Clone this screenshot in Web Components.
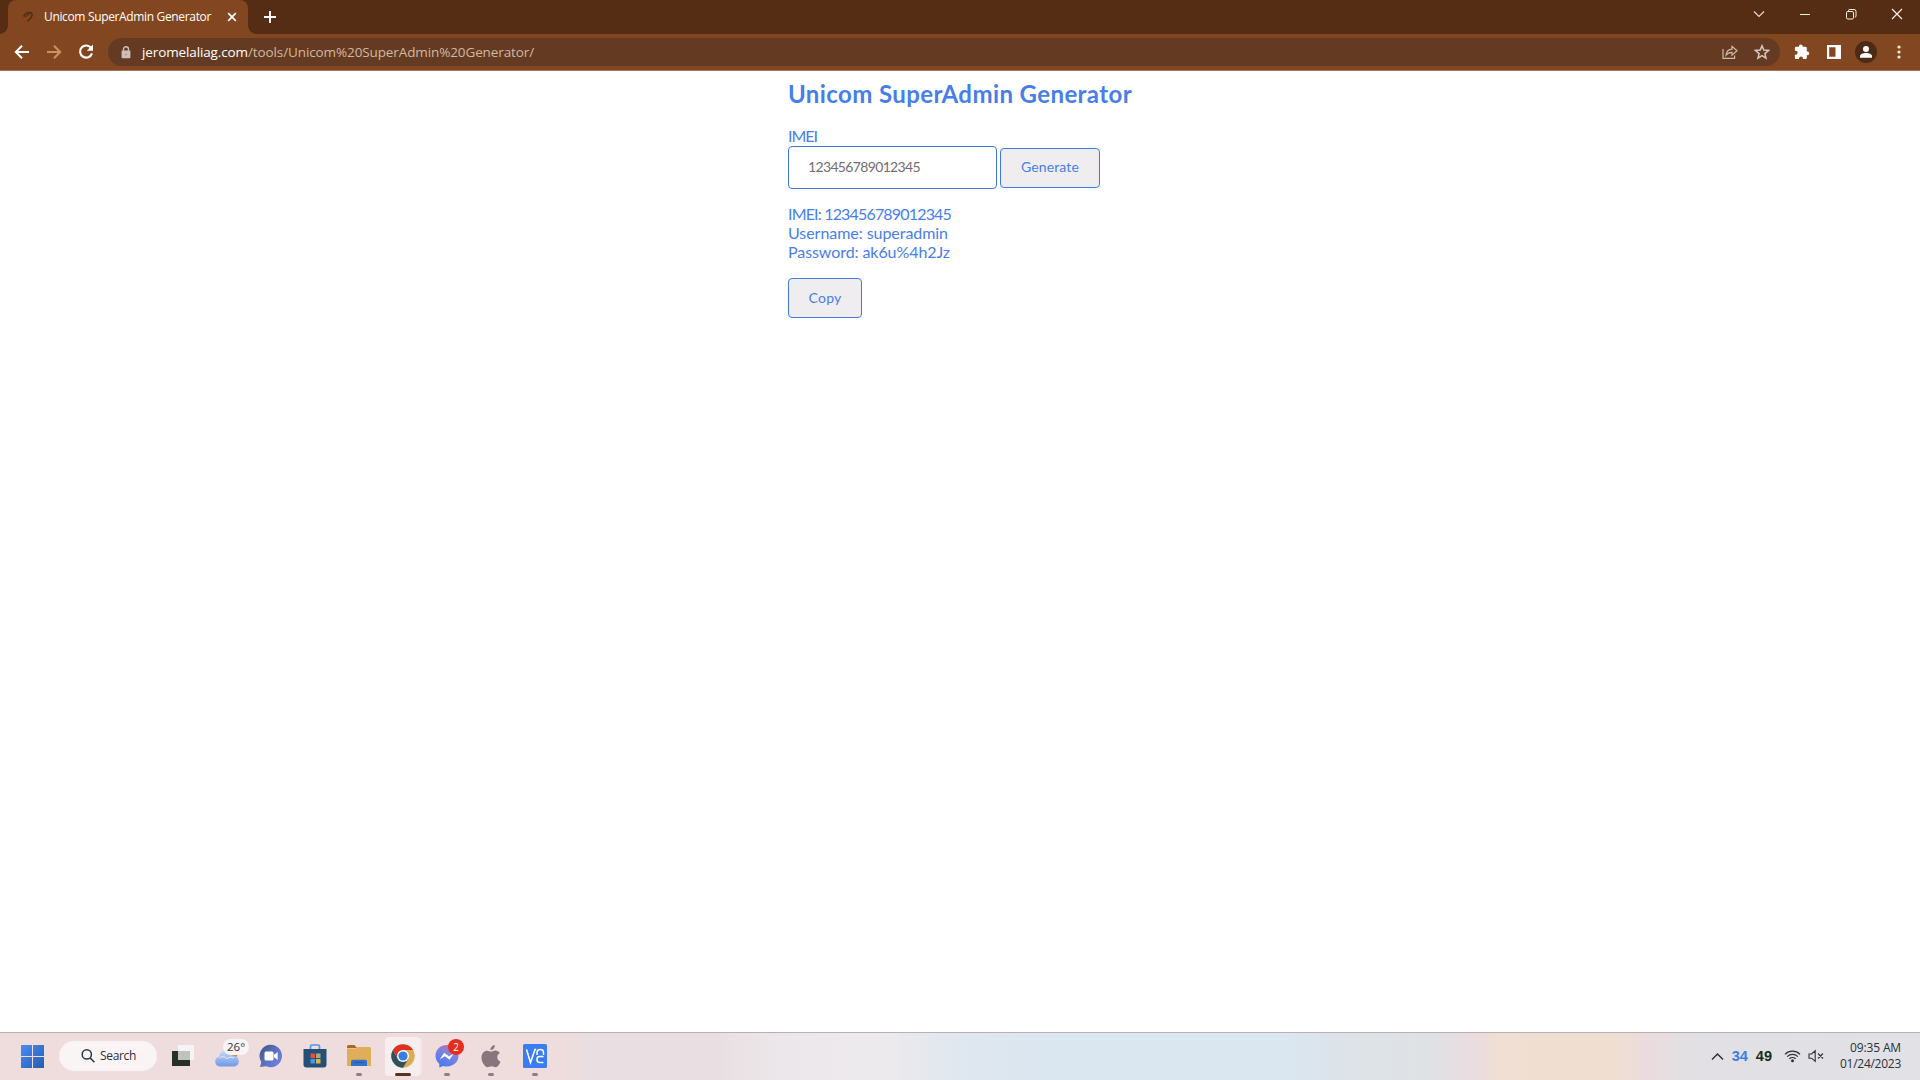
<!DOCTYPE html>
<html lang="en">
<head>
<meta charset="utf-8">
<title>Unicom SuperAdmin Generator</title>
<style>
  html, body { margin: 0; height: 100%; overflow: hidden; background: #fff; }
  body { display: flex; flex-direction: column; font-family: "Open Sans", "Noto Sans", sans-serif; }
</style>
</head>
<body>
<browser-tabs>
  <browser-tab><fit-text width="167">Unicom SuperAdmin Generator</fit-text></browser-tab>
</browser-tabs>
<browser-toolbar>
  <fit-text slot="host" width="106">jeromelaliag.com</fit-text>
  <fit-text slot="path" width="286">/tools/Unicom%20SuperAdmin%20Generator/</fit-text>
</browser-toolbar>
<admin-generator imei="123456789012345" username="superadmin" password="ak6u%4h2Jz"></admin-generator>
<task-bar></task-bar>

<script>
/**
 * Attaches an open shadow root with the given markup.
 * @param $elem
 * @param html
 */
function render($elem, html) {
  const $template = document.createElement("template");
  $template.innerHTML = html;
  $elem.attachShadow({ mode: "open" }).appendChild($template.content.cloneNode(true));
}

const ICONS = {
  back: `<svg width="16" height="16" viewBox="0 0 16 16" fill="none" stroke="#fff" stroke-width="2"><path d="M15 8H2.5M8 1.8 1.8 8 8 14.2"/></svg>`,
  forward: `<svg width="16" height="16" viewBox="0 0 16 16" fill="none" stroke="#c99462" stroke-width="2"><path d="M1 8h12.5M8 1.8 14.2 8 8 14.2"/></svg>`,
  reload: `<svg width="16" height="16" viewBox="0 0 16 16"><path d="M13.3 4.2A6.1 6.1 0 1 0 14 9.4" fill="none" stroke="#fff" stroke-width="2.1"/><path d="M15 .6v6.2H8.8z" fill="#fff"/></svg>`,
  lock: `<svg width="10" height="13" viewBox="0 0 10 13"><rect x=".6" y="4.6" width="8.8" height="7.6" rx="1" fill="#c9c0bb"/><path d="M2.5 5V3.2a2.5 2.5 0 0 1 5 0V5" fill="none" stroke="#c9c0bb" stroke-width="1.4"/><circle cx="5" cy="8.4" r="1" fill="#a89a92"/></svg>`,
  share: `<svg width="16" height="16" viewBox="0 0 16 16" fill="none" stroke="#cfb9aa" stroke-width="1.2"><path d="M1 5v9.3h11.6v-2.8"/><path d="M4 11.2c.4-3.6 2.4-5.8 6-6V2.4L15 6.8l-5 4.4V8.4c-2.7 0-4.5.8-6 2.8z"/></svg>`,
  star: `<svg width="16" height="16" viewBox="0 0 16 16" fill="none" stroke="#d5c7be" stroke-width="1.5"><path d="m8 1.8 1.8 4.3 4.7.4-3.6 3.1 1.1 4.6-4-2.5-4 2.5 1.1-4.6-3.6-3.1 4.7-.4z"/></svg>`,
  puzzle: `<svg width="16" height="16" viewBox="0 0 16 16" fill="#fff"><path d="M12.8 7.5V4.2c0-.8-.6-1.4-1.4-1.4H8.7V2.4a1.9 1.9 0 0 0-3.8 0v.4H2.2C1.4 2.8.9 3.4.9 4.2v2.500h.7a2 2 0 0 1 0 4H.9v3c0 .8.5 1.400 1.300 1.400H5v-.6a2 2 0 0 1 4 0v.6h2.400c.8 0 1.400-.6 1.400-1.400v-2.500h.7a1.850 1.850 0 0 0 0-3.700z"/></svg>`,
  panel: `<svg width="14" height="14" viewBox="0 0 14 14"><path d="M0 0h14v14H0zM2.200 2.200v9.600h6.300V2.200z" fill="#fff" fill-rule="evenodd"/></svg>`,
  avatar: `<svg width="22" height="22" viewBox="0 0 22 22"><circle cx="11" cy="11" r="11" fill="#4c2a15"/><circle cx="11" cy="8" r="3" fill="#fff"/><path d="M5 16.800v-1.600c0-2.200 3.200-3.200 6-3.200s6 1 6 3.200v1.600z" fill="#fff"/></svg>`,
  dots: `<svg width="4" height="14" viewBox="0 0 4 14" fill="#fff1dc"><circle cx="2" cy="2" r="1.600"/><circle cx="2" cy="7" r="1.600"/><circle cx="2" cy="12" r="1.600"/></svg>`,
  favicon: `<svg width="12" height="12" viewBox="0 0 12 12" fill="none" stroke="#49300f" stroke-width="1.500"><path d="M1.500 5.500C4 1.500 8 .6 9.700 2.300c1.500 1.800-.7 5.200-4.300 7.800"/><path d="m3 6 5-3.300" stroke-width="1"/></svg>`,
  tabClose: `<svg width="10" height="10" viewBox="0 0 10 10" stroke="#fff" stroke-width="1.700"><path d="m1.200 1.200 7.600 7.600M8.800 1.200 1.200 8.800"/></svg>`,
  plus: `<svg width="12" height="12" viewBox="0 0 12 12" stroke="#fff" stroke-width="1.900"><path d="M6 0v12M0 6h12"/></svg>`,
  chevron: `<svg width="12" height="12" viewBox="0 0 12 12" fill="none" stroke="#ecd8c8" stroke-width="1.200"><path d="m1 3.500 5 5 5-5"/></svg>`,
  minimize: `<svg width="12" height="12" viewBox="0 0 12 12"><path d="M1 6h10v1H1z" fill="#fff1e0"/></svg>`,
  restore: `<svg width="12" height="12" viewBox="0 0 12 12" fill="none" stroke="#fff1e0"><rect x="1.500" y="3.500" width="7" height="7.500" rx="1.300"/><path d="M3.500 3.300V2.500q0-1 1-1H9q2 0 2 2v4.600q0 1-1.300 1"/></svg>`,
  close: `<svg width="12" height="12" viewBox="0 0 12 12" stroke="#fff1e0" stroke-width="1.200"><path d="m1 1 10 10M11 1 1 11"/></svg>`,
  windows: `<svg width="23" height="23" viewBox="0 0 23 23"><defs><linearGradient id="w" x2="1" y2="1"><stop stop-color="#4a8cf6"/><stop offset="1" stop-color="#245daf"/></linearGradient></defs><path d="M0 0h11v11H0zM12 0h11v11H12zM0 12h11v11H0zM12 12h11v11H12z" fill="url(#w)"/></svg>`,
  search: `<svg width="14" height="14" viewBox="0 0 14 14" fill="none" stroke="#253746" stroke-width="1.500"><circle cx="5.800" cy="5.400" r="4.600"/><path d="m9.200 8.900 4.200 4.300"/></svg>`,
  taskView: `<svg width="24" height="24" viewBox="0 0 24 24"><path d="M1 7h18v15H1z" fill="#243124"/><path d="M7 1h16v15H7z" fill="#f5f3f3"/><path d="M7 7h12v9H7z" fill="#c3c1be"/></svg>`,
  weather: `<svg width="26" height="26" viewBox="0 0 26 26"><defs><linearGradient id="c" y2="1" x2="0"><stop stop-color="#c5d9fa"/><stop offset="1" stop-color="#7199e5"/></linearGradient></defs><circle cx="19" cy="11" r="4.500" fill="#e48b38"/><path d="M5.500 23.500a5 5 0 0 1-.5-9.800C6 9.500 8.500 7.500 12 7.500c3.600 0 6 2.300 6.300 5.300 8.200-.2 8.700 10.700 1.200 10.700z" fill="url(#c)"/><path d="M5 15c4-2.500 7-1 8 1 2-2 4-2.400 7-1" fill="none" stroke="#e4edfc"/></svg>`,
  chat: `<svg width="24" height="24" viewBox="0 0 24 24"><defs><linearGradient id="t" x2="1" y2=".8"><stop stop-color="#345681"/><stop offset=".5" stop-color="#5a6fbd"/><stop offset="1" stop-color="#7382df"/></linearGradient></defs><path d="M12 .8a11.200 11.200 0 1 1-4.600 21.500L1 23l1.300-5A11.200 11.200 0 0 1 12 .8z" fill="url(#t)"/><rect x="5.500" y="7.500" width="9" height="9" rx="1.500" fill="#fff"/><path d="M15 10.800 18.700 8v8L15 13.200z" fill="#fff"/></svg>`,
  store: `<svg width="24" height="24" viewBox="0 0 24 24"><path d="M7.500 6V2.500q0-1.500 1.500-1.500h6q1.500 0 1.500 1.500V6" fill="none" stroke="#4d96e8" stroke-width="1.700"/><path d="M.5 5h23v15.500q0 3-3 3h-17q-3 0-3-3z" fill="#245078"/><path d="M7.500 9.500H12V14H7.500z" fill="#e94e40"/><path d="M13 9.500h4.500V14H13z" fill="#a4ad7a"/><path d="M7.500 15H12v4.500H7.500z" fill="#4895e8"/><path d="M13 15h4.500v4.500H13z" fill="#dfb24b"/></svg>`,
  folder: `<svg width="24" height="24" viewBox="0 0 24 24"><path d="M0 2.500Q0 1 1.500 1h6L10 4H0z" fill="#a66b20"/><path d="M0 4.500h8.500L11 3h11.500Q24 3 24 4.500V22H0z" fill="#dfae58"/><path d="M4 22v-4.500q0-1.800 1.800-1.800h12.400q1.800 0 1.800 1.800V22z" fill="#3171c9"/><path d="M7 18.500h10" stroke="#245aa5"/></svg>`,
  chrome: `<svg width="24" height="24" viewBox="0 0 24 24"><circle cx="12" cy="12" r="11.700" fill="#d9ac52"/><path d="M1.900 6.100A11.700 11.700 0 0 1 22.100 6H12v6L7 15z" fill="#df3024"/><path d="M1.900 6.100A11.700 11.700 0 0 0 12 23.700L17.200 15H12l-5.200 0z" fill="#2e515d"/><circle cx="12" cy="12" r="6" fill="#fff"/><circle cx="12" cy="12" r="4.600" fill="#347ee4"/></svg>`,
  messenger: `<svg width="24" height="24" viewBox="0 0 24 24"><defs><linearGradient id="m" x1=".3" y1="1" x2=".8" y2="0"><stop stop-color="#477af0"/><stop offset=".65" stop-color="#8282dc"/><stop offset="1" stop-color="#e45f78"/></linearGradient></defs><path d="M12 1C5.400 1 .5 5.700 .5 11.800c0 3.300 1.400 6 3.700 7.900l.2 3.800 3.700-1.600c1.200.4 2.500.5 3.900.5 6.600 0 11.500-4.600 11.500-10.600S18.600 1 12 1z" fill="url(#m)"/><path d="m4.700 15.200 4.500-6.500 4.700 3.500 5.200-3-4.600 6.500-4.700-3.500z" fill="#fff"/></svg>`,
  apple: `<svg width="22" height="24" viewBox="0 0 22 24"><path d="M14.800 1c.2 3-1.900 5.200-4.300 5.200C10.300 3.600 12.200 1.300 14.800 1zM11 7.700c1.200 0 2.500-1.100 4.500-1.100 1.700 0 3.300.9 4.300 2.300-3.700 2.200-3.100 7.200.7 8.700-1.100 3-2.900 5.600-4.900 5.600-1.600 0-2.200-.9-4-.9-1.900 0-2.600.9-4 .9C4.800 23.200 1.500 18.200 1.500 13.600c0-4.500 2.800-6.900 5.600-6.900 1.700 0 3 1 3.900 1z" fill="#89757d"/></svg>`,
  vnc: `<svg width="24" height="24" viewBox="0 0 24 24"><rect width="24" height="24" rx="1.500" fill="#3b7df0"/><path d="m3.500 5.500 4 13L12 5.500l1.200 0M14 11V9q0-3.500 3.300-3.500T20.500 9v2M20.500 12.500H17q-3 0-3 2.500v1q0 2.500 3 2.500h3.500" fill="none" stroke="#fff" stroke-width="1.500"/></svg>`,
  trayUp: `<svg width="13" height="9" viewBox="0 0 13 9" fill="none" stroke="#303238" stroke-width="1.500"><path d="m1 7.500 5.500-5.500L12 7.500"/></svg>`,
  wifi: `<svg width="17" height="14" viewBox="0 0 17 14" fill="none" stroke="#303238" stroke-width="1.200"><path d="M1 5.300a10.600 10.600 0 0 1 15 0M3.200 7.600a7.500 7.500 0 0 1 10.600 0M5.400 9.800a4.400 4.400 0 0 1 6.200 0"/><circle cx="8.500" cy="11.800" r="1.500" fill="#303238" stroke="none"/></svg>`,
  mute: `<svg width="16" height="14" viewBox="0 0 16 14" fill="none" stroke="#303238" stroke-width="1.100"><path d="M1 5v4.200h2.600L7.200 12.300V1.800L3.600 5zM10 4.500l5 5M15 4.500l-5 5"/></svg>`,
};

// Text run that is tracked to fill a given width in pixels.
class FitText extends HTMLElement {
  connectedCallback() {
    if (this.shadowRoot) return;
    render(this, `<style>:host { display: inline-block; white-space: pre; }</style><span><slot></slot></span>`);
    const $span = this.shadowRoot.querySelector("span");
    const width = parseFloat(this.getAttribute("width"));
    const gap = width - $span.getBoundingClientRect().width;
    this.style.width = `${width}px`;
    this.style.letterSpacing = `${gap / this.textContent.length}px`;
  }
}

class UiIcon extends HTMLElement {
  connectedCallback() {
    if (this.shadowRoot) return;
    render(this, `
      <style>
        :host { display: inline-flex; flex: none; }
        svg { display: block; }
      </style>${ICONS[this.getAttribute("name")]}`);
  }
}

class BrowserTab extends HTMLElement {
  constructor() {
    super();
    render(this, `
      <style>
        :host {
          display: flex; align-items: center; box-sizing: border-box; position: relative;
          width: 240px; height: 34px; padding: 0 11px 0 14px;
          background: #824620; border-radius: 8px 8px 0 0;
          color: #fff; font-size: 12px;
        }
        :host::before, :host::after {
          content: ""; position: absolute; bottom: 0; width: 8px; height: 8px;
        }
        :host::before { left: -8px; background: radial-gradient(circle at 0 0, transparent 7.5px, #824620 8px); }
        :host::after { right: -8px; background: radial-gradient(circle at 100% 0, transparent 7.5px, #824620 8px); }
        .title { flex: 1; margin-left: 10px; line-height: 16px; white-space: nowrap; }
      </style>
      <ui-icon name="favicon"></ui-icon>
      <span class="title"><slot></slot></span>
      <ui-icon name="tabClose"></ui-icon>`);
  }
}

class BrowserTabs extends HTMLElement {
  constructor() {
    super();
    render(this, `
      <style>
        :host { display: flex; flex: none; height: 34px; padding-left: 8px; background: #552c14; }
        .new { margin: 11px 0 0 16px; }
        .controls { display: flex; gap: 34px; margin: 8px 17px 0 auto; }
      </style>
      <slot></slot>
      <ui-icon class="new" name="plus"></ui-icon>
      <div class="controls">
        <ui-icon name="chevron"></ui-icon>
        <ui-icon name="minimize"></ui-icon>
        <ui-icon name="restore"></ui-icon>
        <ui-icon name="close"></ui-icon>
      </div>`);
  }
}

class BrowserToolbar extends HTMLElement {
  constructor() {
    super();
    render(this, `
      <style>
        :host {
          display: flex; flex: none; align-items: center; box-sizing: border-box;
          height: 37px; padding: 0 19px 0 14px;
          background: #824620; border-bottom: 1px solid #a57355;
        }
        .nav { display: flex; gap: 16px; width: 94px; }
        .omnibox {
          display: flex; flex: 1; align-items: center; box-sizing: border-box;
          height: 28px; padding: 0 10px 0 13px; border-radius: 14px;
          background: #643b22; font-size: 14px; line-height: 20px;
        }
        .url { display: flex; flex: 1; margin-left: 11px; color: #d2b7a0; font-size: 13.5px; }
        .url slot[name=host] { color: #fff; }
        .page { display: flex; gap: 16px; }
        .actions { display: flex; align-items: center; margin-left: 14px; }
        .panel { margin: 0 14px 0 17px; }
        .dots { margin-left: 20px; }
      </style>
      <div class="nav">
        <ui-icon name="back"></ui-icon>
        <ui-icon name="forward"></ui-icon>
        <ui-icon name="reload"></ui-icon>
      </div>
      <div class="omnibox">
        <ui-icon name="lock"></ui-icon>
        <div class="url"><slot name="host"></slot><slot name="path"></slot></div>
        <div class="page">
          <ui-icon name="share"></ui-icon>
          <ui-icon name="star"></ui-icon>
        </div>
      </div>
      <div class="actions">
        <ui-icon name="puzzle"></ui-icon>
        <ui-icon class="panel" name="panel"></ui-icon>
        <ui-icon name="avatar"></ui-icon>
        <ui-icon class="dots" name="dots"></ui-icon>
      </div>`);
  }
}

class AdminGenerator extends HTMLElement {
  connectedCallback() {
    if (this.shadowRoot) return;
    const imei = this.getAttribute("imei");
    render(this, `
      <style>
        :host {
          display: block; flex: 1; padding: 8px 0 0 788px;
          color: #477eea; font: 16px/19px Lato, "Open Sans", sans-serif;
        }
        h2 { display: flex; margin: 0 0 17px; font-size: 24px; line-height: 30px; }
        .label { display: flex; margin-bottom: 1px; }
        .row { display: flex; align-items: center; gap: 3px; margin-bottom: 15px; }
        .field, .button {
          display: flex; align-items: center; box-sizing: border-box;
          border: 1px solid #3f7bd8; border-radius: 4px; padding-bottom: 2px; font-size: 14px;
        }
        .field { width: 209px; height: 43px; padding-left: 19px; color: #756b72; }
        .button { justify-content: center; width: 100px; height: 40px; background: #f0edf0; }
        .copy { width: 74px; margin-top: 17px; }
        .output fit-text { display: block; }
      </style>
      <h2><fit-text width="344">Unicom SuperAdmin Generator</fit-text></h2>
      <div class="label"><fit-text width="29">IMEI</fit-text></div>
      <div class="row">
        <div class="field"><fit-text width="112">${imei}</fit-text></div>
        <div class="button"><fit-text width="58">Generate</fit-text></div>
      </div>
      <div class="output">
        <fit-text width="163">IMEI: ${imei}</fit-text>
        <fit-text width="160">Username: ${this.getAttribute("username")}</fit-text>
        <fit-text width="162">Password: ${this.getAttribute("password")}</fit-text>
      </div>
      <div class="button copy"><fit-text width="33">Copy</fit-text></div>`);
  }
}

// One slot in the taskbar: icon, optional badge and running indicator.
class TaskItem extends HTMLElement {
  connectedCallback() {
    if (this.shadowRoot) return;
    render(this, `
      <style>
        :host {
          display: flex; align-items: center; justify-content: center; flex: none;
          position: relative; width: 44px; height: 47px;
        }
        :host([active])::before {
          content: ""; position: absolute; left: 4px; top: 4px; width: 35px; height: 39px;
          background: #f7efef; border-radius: 4px; box-shadow: 3px 0 0 -1px #f3e8e8;
        }
        ui-icon { position: relative; }
        :host([running])::after {
          content: ""; position: absolute; left: 19px; bottom: 4px; width: 6px; height: 3px;
          border-radius: 2px; background: #8b7f87;
        }
        :host([active])::after { left: 14px; width: 16px; background: #5b3220; }
        ::slotted(*) { position: absolute; }
      </style>
      <ui-icon name="${this.getAttribute("icon")}"></ui-icon>
      <slot></slot>`);
  }
}

class TaskBar extends HTMLElement {
  constructor() {
    super();
    render(this, `
      <style>
        :host {
          display: flex; flex: none; align-items: center; box-sizing: border-box; height: 48px;
          padding: 0 19px 1px 21px; border-top: 1px solid #b9afb2; color: #29313a; font-size: 12px;
          background: linear-gradient(90deg, #efdddd 0, #efdddd 565px, #e9dee2 590px, #e9dee2 705px,
            #ece7ea 780px, #edeaed 885px, #dfe7ef 960px, #dae6f0 1050px, #dae6f0 1290px,
            #dde3e8 1350px, #dfe2e5 1430px, #eadce0 1475px, #f0dfd2 1500px, #f0dfd0 1610px,
            #eadcde 1648px, #e2e0e4 1690px, #e1e1e6 100%);
        }
        .search {
          display: flex; align-items: center; box-sizing: border-box; gap: 5px;
          width: 98px; height: 30px; margin: 0 4px 0 15px; padding-left: 22px;
          border-radius: 15px; background: #faf4f4; line-height: 16px;
        }
        .temp {
          left: 18px; top: 6px; height: 16px; padding: 0 4px; border-radius: 8px;
          background: #faf4f4; line-height: 16px; font-size: 11.5px;
        }
        .badge {
          left: 23px; top: 6px; width: 16px; height: 16px; border-radius: 50%;
          background: #e62c1c; color: #fff; font-size: 10px; line-height: 16px; text-align: center;
        }
        .tray { display: flex; align-items: center; margin-left: auto; }
        .num { font: bold 14.5px/18px "Liberation Sans", sans-serif; margin-left: 8px; color: #182c1c; }
        .blue { color: #397ee8; }
        .wifi { margin: 0 7px 0 12px; }
        .clock { display: flex; flex-direction: column; align-items: flex-end; width: 77px; line-height: 16px; }
      </style>
      <ui-icon name="windows"></ui-icon>
      <div class="search"><ui-icon name="search"></ui-icon><fit-text width="36">Search</fit-text></div>
      <task-item icon="taskView"></task-item>
      <task-item icon="weather"><span class="temp">26°</span></task-item>
      <task-item icon="chat"></task-item>
      <task-item icon="store"></task-item>
      <task-item icon="folder" running></task-item>
      <task-item icon="chrome" active running></task-item>
      <task-item icon="messenger" running><span class="badge">2</span></task-item>
      <task-item icon="apple" running></task-item>
      <task-item icon="vnc" running></task-item>
      <div class="tray">
        <ui-icon name="trayUp"></ui-icon>
        <span class="num blue">34</span>
        <span class="num">49</span>
        <ui-icon class="wifi" name="wifi"></ui-icon>
        <ui-icon name="mute"></ui-icon>
        <div class="clock">
          <fit-text width="51">09:35 AM</fit-text>
          <fit-text width="61">01/24/2023</fit-text>
        </div>
      </div>`);
  }
}

customElements.define("ui-icon", UiIcon);
customElements.define("browser-tab", BrowserTab);
customElements.define("browser-tabs", BrowserTabs);
customElements.define("browser-toolbar", BrowserToolbar);
customElements.define("admin-generator", AdminGenerator);
customElements.define("task-item", TaskItem);
customElements.define("task-bar", TaskBar);
// Measures its text, so the hosts that style it come first.
customElements.define("fit-text", FitText);
</script>
</body>
</html>
